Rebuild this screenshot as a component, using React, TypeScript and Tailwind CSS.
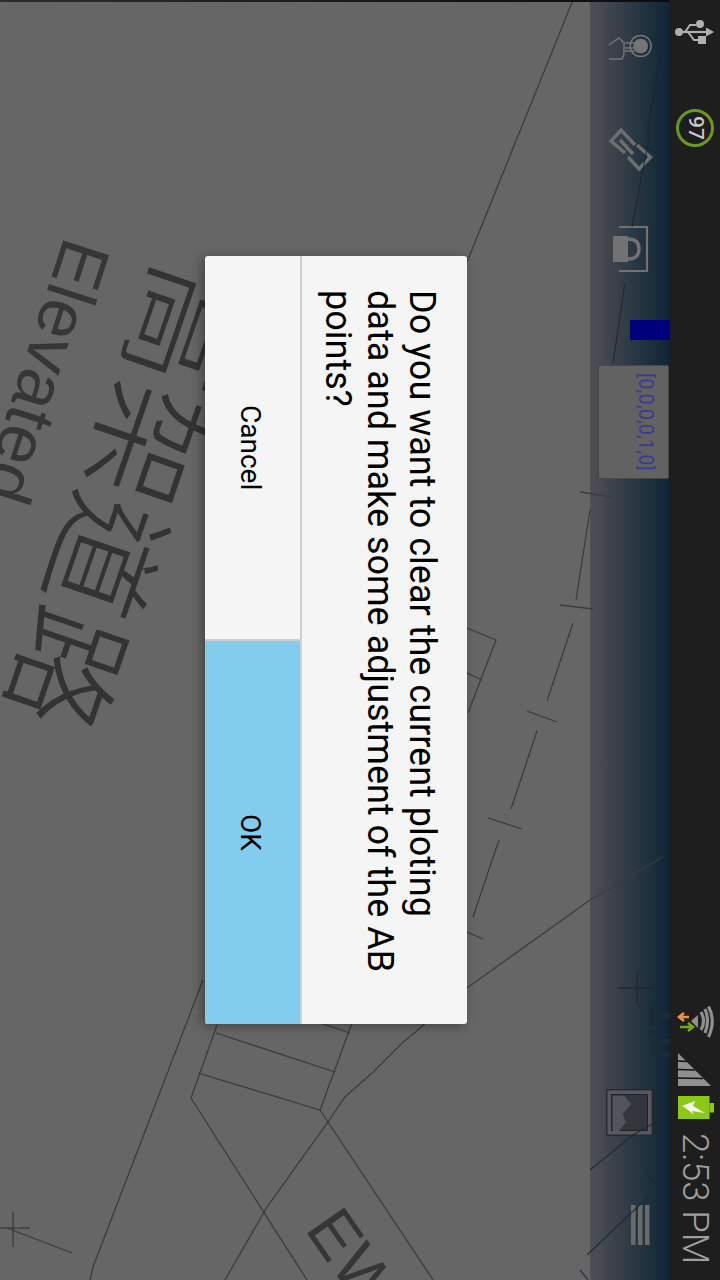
import React from "react";

const L = "#3c3c3c";
const mapLines: string[] = [
  "573,0 467,262",
  "203,980 93,1267 90,1280",
  "217,1025 191,1098 307,1280",
  "216,1033 335,1072",
  "198,1073 320,1110",
  "352,1023 320,1110 433,1280",
  "320,1023 350,1033",
  "663,857 590,900 467,988 400,1045 372,1073 345,1097 328,1122 267,1207 225,1280",
  "7,1228 72,1253",
  "13,1212 13,1247",
  "0,1228 30,1228",
  "560,605 593,609",
  "573,623 547,701",
  "527,711 557,722",
  "537,731 511,809",
  "488,818 522,829",
  "499,840 473,917",
  "467,932 483,939",
  "467,628 496,640 468,713",
  "467,673 482,680",
  "580,492 612,497",
  "590,510 576,600",
];
const panelLines: string[] = [
  "650,40 665,40",
  "660,53 647,137",
  "643,145 662,157",
  "650,133 632,227",
  "625,283 613,363",
  "648,1175 663,1193",
  "590,1170 633,1135 668,1115",
  "587,1255 648,1197",
  "580,1270 588,1280",
  "637,972 637,1005",
  "618,988 653,988",
];

function MapLayer() {
  return (
    <svg width="670" height="1280" viewBox="0 0 670 1280" className="absolute inset-0 blur-[0.4px]">
      {mapLines.map((p) => (
        <polyline key={p} points={p} fill="none" stroke={L} strokeWidth="1.3" />
      ))}
      {panelLines.map((p) => (
        <polyline key={p} points={p} fill="none" stroke="#1c2630" strokeWidth="1.3" opacity="0.8" />
      ))}
      <g fill="#363636" style={{ fontFamily: '"Liberation Sans", sans-serif', fontSize: 70 }}>
        <text transform="translate(65 235) rotate(108)">Elevated</text>
        <text transform="translate(304 1229) rotate(55)" style={{ fontSize: 66 }}>EW</text>
      </g>
      <text
        transform="translate(161 258) rotate(109)"
        fill="#333333"
        stroke="#666666"
        strokeWidth="2.2"
        style={{ fontFamily: '"Noto Sans CJK TC", sans-serif', fontSize: 120 }}
      >
        高架道路
      </text>
      <text
        transform="translate(650 1004) rotate(90)"
        fill="#1a2b38"
        style={{ fontFamily: '"Liberation Sans", sans-serif', fontSize: 40, fontWeight: 700 }}
      >
        1.0
      </text>
    </svg>
  );
}

function TouchIcon() {
  return (
    <svg width="52" height="46" viewBox="0 0 52 46" fill="none" stroke="#757575" strokeWidth="1.5">
      <circle cx="36.700" cy="22" r="10.500" />
      <circle cx="36.700" cy="22" r="7.300" fill="#757575" stroke="none" />
      <polyline points="5,21 15,14 20,19 32,19" />
      <polyline points="21,24 31,24" />
      <polyline points="21,27 31,27" />
      <polyline points="20,20 20,30 18,35 5,35" />
    </svg>
  );
}

function LinkIcon() {
  return (
    <svg width="52" height="52" viewBox="0 0 52 52" fill="none" stroke="#6e6e6e" strokeWidth="3.400">
      <polyline points="31,21 17,6 7,17 21,29" />
      <polyline points="16,16 29,30" />
      <polyline points="24,33 35,45 46.500,33 33,21" />
    </svg>
  );
}

function LockIcon() {
  return (
    <svg width="38" height="50" viewBox="0 0 38 50" fill="none">
      <polyline points="6,2 34,2 34,46 6,46" stroke="#727272" strokeWidth="2.200" />
      <rect x="0" y="11" width="15" height="26" fill="#727272" />
      <path d="M15 14 C24 14 26 19 26 24 C26 29 24 34 15 34" stroke="#727272" strokeWidth="3.400" />
    </svg>
  );
}

function PictureIcon() {
  return (
    <svg width="47" height="47" viewBox="0 0 47 47">
      <rect x="0.700" y="0.700" width="45.600" height="45.600" fill="#55585e" stroke="#26282c" strokeWidth="1.400" />
      <rect x="5.500" y="5.500" width="36" height="36" fill="#33373d" stroke="#202226" strokeWidth="1" />
      <polygon points="6.700,6.700 18,6.700 25,15 16.700,25 20,33 13,42 6.700,42" fill="#52555b" />
    </svg>
  );
}

function MenuIcon() {
  return (
    <svg width="19" height="40" viewBox="0 0 19 40" fill="#6a6a6a">
      <rect x="0" y="0" width="4.500" height="40" />
      <rect x="7" y="0" width="4.500" height="40" />
      <rect x="14" y="0" width="4.500" height="40" />
    </svg>
  );
}

function UsbIcon() {
  return (
    <svg width="40" height="28" viewBox="0 0 40 28" fill="#b0b0b0" stroke="#b0b0b0">
      <circle cx="4" cy="14" r="4" stroke="none" />
      <line x1="3" y1="14" x2="33" y2="14" strokeWidth="2.200" />
      <polygon points="31,9.500 39,14 31,18.500" stroke="none" />
      <polyline points="10,14 15,7 21,7" fill="none" strokeWidth="2" />
      <polyline points="13,14 19,22 25,22" fill="none" strokeWidth="2" />
      <circle cx="25" cy="6" r="4" stroke="none" />
      <rect x="23" y="18" width="8" height="8" stroke="none" />
    </svg>
  );
}

function WifiIcon() {
  return (
    <svg width="38" height="36" viewBox="0 0 38 36" fill="none">
      <polygon points="15,15 22,9 22,22" fill="#8f8f8f" />
      <path d="M25 6 Q30 15 25 24" stroke="#8f8f8f" strokeWidth="3.200" />
      <path d="M29 3 Q34 15 29 27" stroke="#8f8f8f" strokeWidth="3.200" />
      <path d="M32.500 0.500 Q40 15 32.500 31" stroke="#8f8f8f" strokeWidth="3.200" />
      <path d="M13 11 H4 M8 7 L3 11 L8 15" stroke="#e8983a" strokeWidth="2.600" />
      <path d="M4 21 H16 M12 17 L17 21 L12 25" stroke="#74a81c" strokeWidth="2.600" />
    </svg>
  );
}

function SignalIcon() {
  return (
    <svg width="33" height="33" viewBox="0 0 33 33">
      <polygon points="0,0 0,33 33,33" fill="#909090" />
      <line x1="0" y1="8" x2="9" y2="8.500" stroke="#111" strokeWidth="1.600" />
      <line x1="0" y1="16.500" x2="17" y2="17" stroke="#111" strokeWidth="1.600" />
      <line x1="0" y1="25" x2="25" y2="25.500" stroke="#111" strokeWidth="1.600" />
    </svg>
  );
}

function BatteryIcon() {
  return (
    <svg width="36" height="24" viewBox="0 0 36 24">
      <rect x="0" y="0" width="31.500" height="23" fill="#8cc814" />
      <rect x="31.500" y="7" width="4.500" height="9.500" fill="#8cc814" />
      <polygon points="4,10 17,5 15,10 27,17 14,15 16,19 9,13" fill="#f4f4f4" />
    </svg>
  );
}

function ActionPanel() {
  return (
    <div className="flex h-full w-[80px] flex-col bg-gradient-to-r from-[#4f4f55] to-[#0b2535]">
      <div className="ml-[14px] mt-[24px] h-[46px]">
        <TouchIcon />
      </div>
      <div className="ml-[14px] mt-[54px] h-[52px]">
        <LinkIcon />
      </div>
      <div className="ml-[23px] mt-[49px] h-[50px]">
        <LockIcon />
      </div>
      <div className="ml-[40px] mt-[45px] h-[20px] w-[40px] bg-[#00007a]" />
      <div className="relative z-10 ml-[8px] mt-[25px] flex h-[114px] w-[71px] items-center justify-end rounded-[2px] border border-[#474747] bg-[#626262] pr-[10px]">
        <span className="font-['Roboto',sans-serif] text-[20px] leading-[24px] text-[#3a3a90] [writing-mode:vertical-rl]">
          [0,0,0,0,1,0]
        </span>
      </div>
      <div className="ml-[16px] mt-[610px] h-[47px]">
        <PictureIcon />
      </div>
      <div className="ml-[41px] mt-[69px]">
        <MenuIcon />
      </div>
    </div>
  );
}

function StatusBar() {
  return (
    <div className="flex h-full w-[50px] flex-col bg-[#1e1e1e]">
      <div className="ml-[5px] mt-[18px] h-[28px]">
        <UsbIcon />
      </div>
      <div className="ml-[6px] mt-[63px] flex h-[38px] w-[38px] items-center justify-center rounded-full border-[3.5px] border-[#6d981f]">
        <span className="font-['Roboto',sans-serif] text-[21px] font-medium leading-none text-[#c8c8c8] [writing-mode:vertical-rl]">
          97
        </span>
      </div>
      <div className="ml-[6px] mt-[859px] h-[36px]">
        <WifiIcon />
      </div>
      <div className="ml-[8px] mt-[11px] h-[33px]">
        <SignalIcon />
      </div>
      <div className="ml-[8px] mt-[10px] h-[24px]">
        <BatteryIcon />
      </div>
      <div className="mt-[13px] pr-[6px] font-['Roboto',sans-serif] text-[36.5px] font-light leading-[38px] text-[#a0a0a0] [writing-mode:vertical-rl]">
        2:53 PM
      </div>
    </div>
  );
}

function Dialog() {
  return (
    <div className="absolute left-[205px] top-[256px] z-20 flex h-[768px] w-[262px] overflow-hidden rounded-[3px] bg-[#f5f5f5] font-['Roboto',sans-serif] text-black shadow-[-3px_2px_12px_rgba(0,0,0,0.35)]">
      <div className="flex w-[97px] flex-col border-r-2 border-[#d0d0d0]">
        <div className="flex h-[385px] items-center justify-center border-b-2 border-[#cfcfcf] pr-[5px] text-[28px] [writing-mode:vertical-rl]">
          Cancel
        </div>
        <div className="flex flex-1 items-center justify-center bg-[#82cdee] pr-[5px] text-[28px] [writing-mode:vertical-rl]">
          OK
        </div>
      </div>
      <p className="flex-1 pb-[40px] pr-[24px] pt-[34px] text-[36px] leading-[42px] [writing-mode:vertical-rl]">
        Do you want to clear the current ploting data and make some adjustment of the AB points?
      </p>
    </div>
  );
}

export default function App() {
  return (
    <div className="relative flex h-[1280px] w-[720px] overflow-hidden bg-[#666666]">
      <div className="relative flex h-full w-[670px]">
        <div className="h-full flex-1" />
        <ActionPanel />
        <MapLayer />
        <div className="absolute left-0 top-0 h-[2px] w-full bg-gradient-to-r from-[#2c2c2c] to-[#0c0c0c]" />
      </div>
      <StatusBar />
      <Dialog />
    </div>
  );
}
